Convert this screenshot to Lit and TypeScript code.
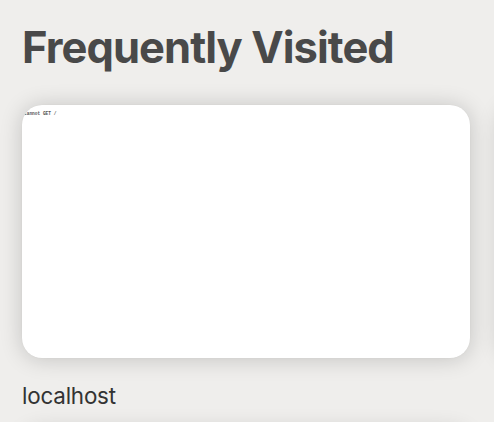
import { LitElement, html, css } from "lit";
import { customElement } from "lit/decorators.js";

@customElement("app-root")
export class AppRoot extends LitElement {
  static styles = css`
    :host {
      display: block;
      box-sizing: border-box;
      width: 494px;
      height: 422px;
      overflow: hidden;
      padding: 21px 0 0 22px;
      background: #efeeec;
      font-family: Inter, "Liberation Sans", sans-serif;
    }
    .title {
      margin: 0 0 32px;
      height: 52px;
      line-height: 52px;
      font-size: 43.5px;
      font-weight: 700;
      letter-spacing: -0.94px;
      color: #494949;
      white-space: nowrap;
    }
    .grid {
      display: grid;
      grid-template-columns: 448px 448px;
      column-gap: 30px;
    }
    .site {
      height: 325px;
    }
    .preview {
      box-sizing: border-box;
      height: 252.5px;
      border-radius: 20px;
      background: #fff;
      overflow: hidden;
      padding: 5.5px 0 0 2px;
      font: bold 4.5px/6px "Liberation Mono", monospace;
      color: #555;
      box-shadow: 0 0 1px rgba(0, 0, 0, 0.08), 0 1px 22px rgba(0, 0, 0, 0.19);
    }
    .name {
      margin-top: 24.5px;
      line-height: 28px;
      font-size: 22.4px;
      letter-spacing: -0.2px;
      color: #333;
    }
  `;

  render() {
    return html`
      <h1 class="title">Frequently Visited</h1>
      <div class="grid">
        <div class="site">
          <div class="preview">Cannot GET /</div>
          <div class="name">localhost</div>
        </div>
        <div class="site"><div class="preview"></div></div>
        <div class="site"><div class="preview"></div></div>
      </div>
    `;
  }
}
